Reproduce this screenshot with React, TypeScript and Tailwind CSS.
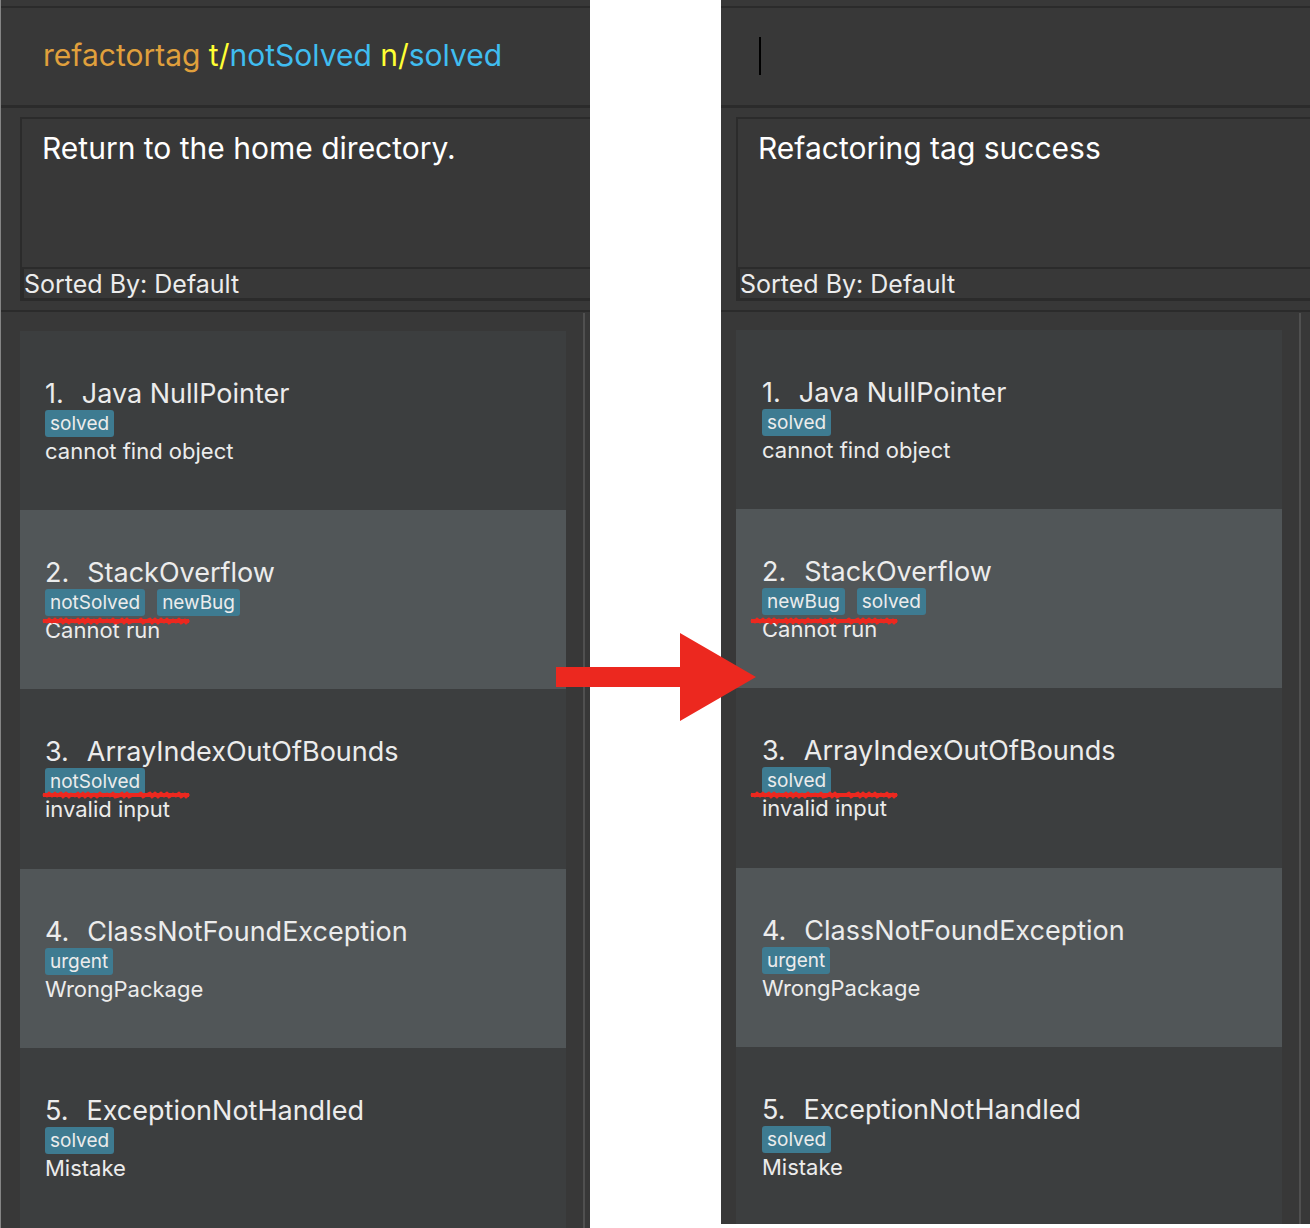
import React from "react";

type Bug = { name: string; tags: string[]; note: string; mark?: string };

type Token = { text: string; color: string };

type PanelProps = {
  label: string;
  command: Token[];
  result: string;
  bugs: Bug[];
  panelClass: string;
  boxClass: string;
  listClass: string;
  railClass: string;
  caret?: boolean;
};

const before: Bug[] = [
  { name: "Java NullPointer", tags: ["solved"], note: "cannot find object" },
  { name: "StackOverflow", tags: ["notSolved", "newBug"], note: "Cannot run", mark: "-left-[3px] top-[28px]" },
  { name: "ArrayIndexOutOfBounds", tags: ["notSolved"], note: "invalid input", mark: "-left-[3px] top-[23px]" },
  { name: "ClassNotFoundException", tags: ["urgent"], note: "WrongPackage" },
  { name: "ExceptionNotHandled", tags: ["solved"], note: "Mistake" },
];

const after: Bug[] = [
  { name: "Java NullPointer", tags: ["solved"], note: "cannot find object" },
  { name: "StackOverflow", tags: ["newBug", "solved"], note: "Cannot run", mark: "-left-[12px] top-[29px]" },
  { name: "ArrayIndexOutOfBounds", tags: ["solved"], note: "invalid input", mark: "-left-[12px] top-[24px]" },
  { name: "ClassNotFoundException", tags: ["urgent"], note: "WrongPackage" },
  { name: "ExceptionNotHandled", tags: ["solved"], note: "Mistake" },
];

function Scribble({ place }: { place: string }) {
  return (
    <svg className={`absolute z-10 ${place}`} width="148" height="8" viewBox="0 0 148 8" fill="none" aria-hidden="true">
      <path
        d="M1 3L5 5L7 2L10 5L13 2L15 5L19 2L21 6L24 2L27 6L29 3L33 5L36 2L37 6L41 2L43 6L46 2L49 6L52 3L55 6L58 2L61 5L65 3L68 5L71 2L73 6L77 5L80 2L82 6L85 2L87 6L91 4L96 4L99 2L101 6L104 4L108 2L110 6L113 2L116 6L119 2L122 5L125 2L127 6L131 3L134 5L137 2L139 6L143 3L144 6L147 3"
        stroke="#ec281f"
        strokeWidth="3"
        strokeLinejoin="round"
      />
      <path d="M1 4H147" stroke="#ec281f" strokeWidth="4" />
    </svg>
  );
}

function BugRow({ bug, index }: { bug: Bug; index: number }) {
  return (
    <li className="h-[179px] pt-[47px] odd:bg-[#3c3e3f] even:bg-[#515658] nth-3:h-[180px] last:h-auto last:flex-1">
      <h2 className="flex gap-[18px] text-[27px] leading-8">
        <span>{index + 1}.</span>
        <span>{bug.name}</span>
      </h2>
      <div className="relative flex gap-3">
        {bug.tags.map((tag) => (
          <span key={tag} className="rounded-[3px] bg-[#3e7b91] px-[5px] text-[19px] leading-[27px]">
            {tag}
          </span>
        ))}
        {bug.mark && <Scribble place={bug.mark} />}
      </div>
      <p className="text-[22px] leading-7">{bug.note}</p>
    </li>
  );
}

function Panel({ label, command, result, bugs, panelClass, boxClass, listClass, railClass, caret }: PanelProps) {
  return (
    <section aria-label={label} className={`flex min-w-0 flex-col bg-[#383838] ${panelClass}`}>
      <div className="relative mt-[6px] border-t-2 border-b-3 border-[#2b2b2b]">
        <input
          type="text"
          aria-label={`${label} command`}
          defaultValue={command.map((t) => t.text).join("")}
          className="block h-[97px] w-full bg-transparent px-[42px] pb-[2px] text-[30px] text-transparent outline-none"
        />
        <div aria-hidden="true" className="pointer-events-none absolute inset-0 flex items-center pb-[2px] pl-[42px] text-[30px] whitespace-pre">
          {command.map((t) => (
            <span key={t.text} className={t.color}>
              {t.text}
            </span>
          ))}
          {caret && <span className="-ml-1 h-[38px] w-[2px] bg-black" />}
        </div>
      </div>
      <div className={`mt-[9px] border-t-2 border-b-3 border-l-2 border-[#2b2b2b] ${boxClass}`}>
        <output className="block h-[148px] pt-[9px] pl-[20px] text-[30px] leading-10 text-white">{result}</output>
        <p className="border-t-2 border-l-2 border-[#2b2b2b] pt-px text-[25px] leading-7">Sorted By: Default</p>
      </div>
      <div className="mt-[9px] flex flex-1 border-t-2 border-[#2b2b2b]">
        <ol className={`flex flex-1 flex-col ${listClass}`}>
          {bugs.map((bug, i) => (
            <BugRow key={bug.name} bug={bug} index={i} />
          ))}
        </ol>
        <div className={`mt-px border-l-2 border-[#505050] ${railClass}`} />
      </div>
    </section>
  );
}

export default function App() {
  return (
    <main className="grid min-h-screen grid-cols-[590fr_131px_589fr] bg-white font-['Inter',sans-serif] text-[#ececec]">
      <Panel
        label="Before"
        command={[
          { text: "refactortag ", color: "text-[#e0a03c]" },
          { text: "t/", color: "text-[#ffff33]" },
          { text: "notSolved ", color: "text-[#40bdf0]" },
          { text: "n/", color: "text-[#ffff33]" },
          { text: "solved", color: "text-[#40bdf0]" },
        ]}
        result="Return to the home directory."
        bugs={before}
        panelClass="border-l border-l-[#858585]"
        boxClass="ml-[19px]"
        listClass="mt-[19px] ml-[19px] *:pl-[25px]"
        railClass="ml-[17px] w-[7px]"
      />
      <div className="relative">
        <svg className="absolute top-[633px] -left-[34px]" width="200" height="88" viewBox="0 0 200 88" role="img" aria-label="becomes">
          <path d="M0 34H124V0L200 44L124 88V54H0Z" fill="#ec281f" />
        </svg>
      </div>
      <Panel
        label="After"
        command={[]}
        caret
        result="Refactoring tag success"
        bugs={after}
        panelClass="mb-1"
        boxClass="ml-[15px]"
        listClass="mt-[18px] ml-[15px] *:pl-[26px]"
        railClass="ml-[17px] w-[11px]"
      />
    </main>
  );
}
